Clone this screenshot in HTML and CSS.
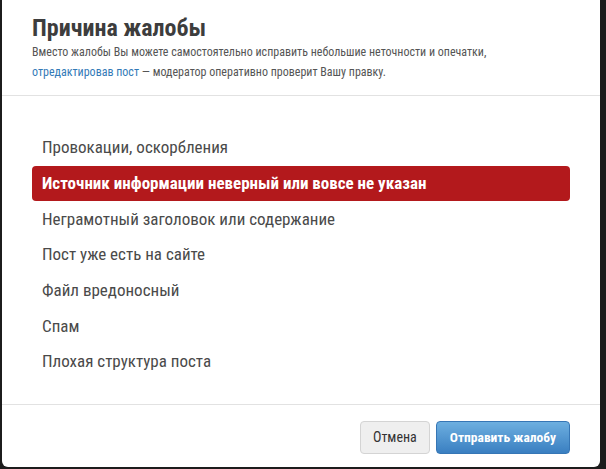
FILE: index.html
```html
<!DOCTYPE html>
<html lang="ru">
<head>
<meta charset="utf-8">
<title>Причина жалобы</title>
<link rel="stylesheet" href="styles.css">
</head>
<body>
<div class="modal">
  <div class="modal-header">
    <h2 class="modal-title">Причина жалобы</h2>
    <p class="modal-desc">Вместо жалобы Вы можете самостоятельно исправить небольшие неточности и опечатки,<br><a href="#" class="link">отредактировав пост</a> — модератор оперативно проверит Вашу правку.</p>
  </div>
  <div class="modal-body">
    <ul class="reasons">
      <li class="reason">Провокации, оскорбления</li>
      <li class="reason active">Источник информации неверный или вовсе не указан</li>
      <li class="reason">Неграмотный заголовок или содержание</li>
      <li class="reason">Пост уже есть на сайте</li>
      <li class="reason">Файл вредоносный</li>
      <li class="reason">Спам</li>
      <li class="reason">Плохая структура поста</li>
    </ul>
  </div>
  <div class="modal-footer">
    <button class="btn btn-default">Отмена</button>
    <button class="btn btn-primary">Отправить жалобу</button>
  </div>
</div>
</body>
</html>
```
FILE: styles.css
```css
html, body {
  margin: 0;
  padding: 0;
  background: #1c1c1c;
  height: 100%;
  overflow: hidden;
}
body {
  font-family: "Roboto Condensed", Roboto, sans-serif;
  font-stretch: condensed;
  color: #4a4a4a;
}
.modal {
  margin-left: 2px;
  width: 598px;
  background: #fff;
  border-radius: 0 0 6px 6px;
}
.modal-header {
  padding: 14px 30px 13px;
  border-bottom: 1px solid #e2e2e2;
}
.modal-title {
  margin: 0;
  font-size: 24px;
  line-height: 28px;
  font-weight: 700;
  color: #3d3d3d;
}
.modal-desc {
  margin: 0;
  font-size: 12px;
  line-height: 20px;
  color: #555;
}
.link {
  color: #337ab7;
  text-decoration: none;
}
.modal-body {
  padding: 34px 30px 24px;
}
.reasons {
  list-style: none;
  margin: 0;
  padding: 0;
}
.reason {
  font-size: 17px;
  line-height: 23px;
  padding: 6.35px 10px;
  border-radius: 4px;
  color: #4a4a4a;
}
.reason.active {
  background: #b3191c;
  color: #fff;
  font-weight: 700;
}
.modal-footer {
  border-top: 1px solid #e2e2e2;
  padding: 16px 30px 13px;
  display: flex;
  justify-content: flex-end;
  gap: 6px;
}
.btn {
  font-family: inherit;
  font-stretch: condensed;
  font-size: 14px;
  height: 33px;
  padding: 0 12px;
  border-radius: 4px;
  border: 1px solid #ccc;
}
.btn-default {
  background: #efefef;
  color: #333;
  border-color: #d4d4d4;
}
.btn-primary {
  font-size: 13.5px;
  padding: 0 13px;
  background: linear-gradient(#6dafe0, #3a7fc1);
  border-color: #3676b5;
  color: #fff;
  font-weight: 700;
}
```
